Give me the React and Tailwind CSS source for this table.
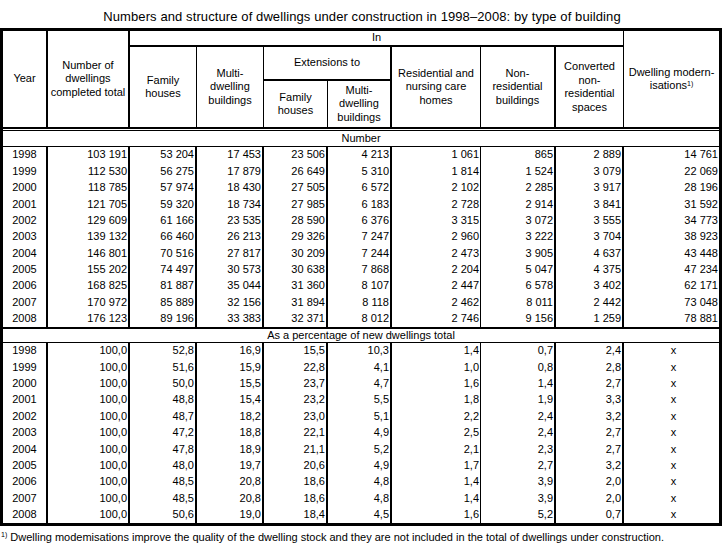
import React from 'react';

const cols = 'grid grid-cols-[45px_82px_67px_67px_64px_64px_89px_75px_68px_95px]';

const numbers = [
  ['1998', '103 191', '53 204', '17 453', '23 506', '4 213', '1 061', '865', '2 889', '14 761'],
  ['1999', '112 530', '56 275', '17 879', '26 649', '5 310', '1 814', '1 524', '3 079', '22 069'],
  ['2000', '118 785', '57 974', '18 430', '27 505', '6 572', '2 102', '2 285', '3 917', '28 196'],
  ['2001', '121 705', '59 320', '18 734', '27 985', '6 183', '2 728', '2 914', '3 841', '31 592'],
  ['2002', '129 609', '61 166', '23 535', '28 590', '6 376', '3 315', '3 072', '3 555', '34 773'],
  ['2003', '139 132', '66 460', '26 213', '29 326', '7 247', '2 960', '3 222', '3 704', '38 923'],
  ['2004', '146 801', '70 516', '27 817', '30 209', '7 244', '2 473', '3 905', '4 637', '43 448'],
  ['2005', '155 202', '74 497', '30 573', '30 638', '7 868', '2 204', '5 047', '4 375', '47 234'],
  ['2006', '168 825', '81 887', '35 044', '31 360', '8 107', '2 447', '6 578', '3 402', '62 171'],
  ['2007', '170 972', '85 889', '32 156', '31 894', '8 118', '2 462', '8 011', '2 442', '73 048'],
  ['2008', '176 123', '89 196', '33 383', '32 371', '8 012', '2 746', '9 156', '1 259', '78 881'],
];

const percents = [
  ['1998', '100,0', '52,8', '16,9', '15,5', '10,3', '1,4', '0,7', '2,4', 'x'],
  ['1999', '100,0', '51,6', '15,9', '22,8', '4,1', '1,0', '0,8', '2,8', 'x'],
  ['2000', '100,0', '50,0', '15,5', '23,7', '4,7', '1,6', '1,4', '2,7', 'x'],
  ['2001', '100,0', '48,8', '15,4', '23,2', '5,5', '1,8', '1,9', '3,3', 'x'],
  ['2002', '100,0', '48,7', '18,2', '23,0', '5,1', '2,2', '2,4', '3,2', 'x'],
  ['2003', '100,0', '47,2', '18,8', '22,1', '4,9', '2,5', '2,4', '2,7', 'x'],
  ['2004', '100,0', '47,8', '18,9', '21,1', '5,2', '2,1', '2,3', '2,7', 'x'],
  ['2005', '100,0', '48,0', '19,7', '20,6', '4,9', '1,7', '2,7', '3,2', 'x'],
  ['2006', '100,0', '48,5', '20,8', '18,6', '4,8', '1,4', '3,9', '2,0', 'x'],
  ['2007', '100,0', '48,5', '20,8', '18,6', '4,8', '1,4', '3,9', '2,0', 'x'],
  ['2008', '100,0', '50,6', '19,0', '18,4', '4,5', '1,6', '5,2', '0,7', 'x'],
];

// right-hand rule of each column in the body
const bodyBorders = ['border-r-2', 'border-r-2', 'border-r-2', 'border-r-2', 'border-r-2', 'border-r-2', 'border-r', 'border-r-2', 'border-r-2', ''];

const head = 'flex flex-col items-center justify-center text-center border-black';

const DataBlock = ({ rows, ruled }) => (
  <div className={`${cols} auto-rows-[16.36px] border-black ${ruled ? 'border-b-2' : ''}`}>
    {rows.map(row =>
      row.map((v, i) => (
        <div
          key={row[0] + '-' + i}
          className={`${bodyBorders[i]} border-black flex items-center whitespace-nowrap ${
            i === 0 ? 'justify-center' : v === 'x' ? 'justify-center pl-1' : 'justify-end pr-px'
          }`}
        >
          {v}
        </div>
      ))
    )}
  </div>
);

const App = () => {
  return (
    <div className="w-[724px] h-[545px] bg-white text-black font-['Liberation_Sans',Arial,sans-serif] text-[11px] leading-[13.5px]">
      {/* Title */}
      <div className="h-[28px] pt-[9px] text-center text-[13px] leading-[15px] tracking-[0.1px]">
        Numbers and structure of dwellings under construction in 1998–2008: by type of building
      </div>

      <div className="w-[722px] border-[3px] border-black">
        {/* Column headings */}
        <div className={`${cols} grid-rows-[16px_34px_48px]`}>
          <div className={`${head} col-start-1 row-start-1 row-span-3 border-r-2 border-b-2`}>Year</div>
          <div className={`${head} col-start-2 row-start-1 row-span-3 border-r-2 border-b-2`}>
            Number of<br />dwellings<br />completed total
          </div>
          <div className={`${head} col-start-3 col-span-7 row-start-1 border-r border-b-2`}>In</div>
          <div className={`${head} col-start-3 row-start-2 row-span-2 border-r border-b-2`}>
            Family<br />houses
          </div>
          <div className={`${head} col-start-4 row-start-2 row-span-2 border-r border-b-2`}>
            Multi-<br />dwelling<br />buildings
          </div>
          <div className={`${head} col-start-5 col-span-2 row-start-2 border-r-2 border-b-2`}>Extensions to</div>
          <div className={`${head} col-start-5 row-start-3 border-r border-b-2`}>
            Family<br />houses
          </div>
          <div className={`${head} col-start-6 row-start-3 border-r-2 border-b-2`}>
            Multi-<br />dwelling<br />buildings
          </div>
          <div className={`${head} col-start-7 row-start-2 row-span-2 border-r border-b-2`}>
            Residential and<br />nursing care<br />homes
          </div>
          <div className={`${head} col-start-8 row-start-2 row-span-2 border-r-2 border-b-2`}>
            Non-<br />residential<br />buildings
          </div>
          <div className={`${head} col-start-9 row-start-2 row-span-2 border-r border-b-2`}>
            Converted<br />non-<br />residential<br />spaces
          </div>
          <div className={`${head} col-start-10 row-start-1 row-span-3 border-b-2`}>
            <span>Dwelling modern-</span>
            <span>
              isations<sup className="text-[7px]">1)</sup>
            </span>
          </div>
        </div>

        <div className="mt-px h-[17px] border-y border-black flex items-center justify-center">Number</div>
        <DataBlock rows={numbers} ruled />

        <div className="h-[14px] border-b border-black flex items-center justify-center">
          As a percentage of new dwellings total
        </div>
        <DataBlock rows={percents} />
      </div>

      {/* Footnote */}
      <div className="mt-[5px] pl-px leading-[13px] whitespace-nowrap">
        <sup className="text-[7px]">1)</sup>&nbsp;Dwelling modemisations improve the quality of the dwelling stock and they are not
        included in the total of dwellings under construction.
      </div>
    </div>
  );
};

export default App;
